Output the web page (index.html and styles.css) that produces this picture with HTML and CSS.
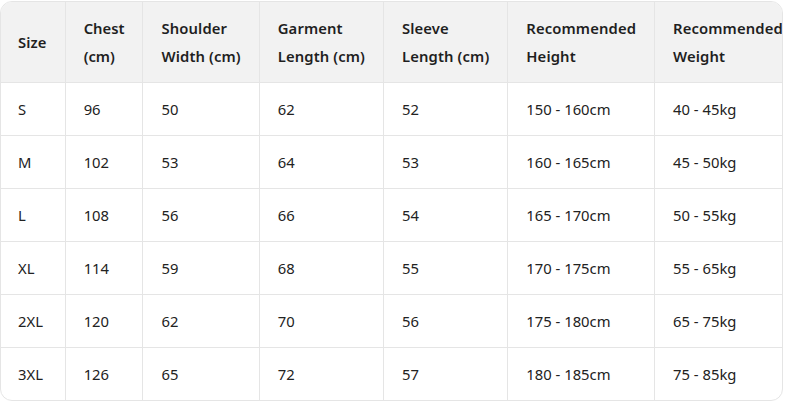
FILE: index.html
```html
<!DOCTYPE html>
<html>
<head>
<meta charset="utf-8">
<link rel="stylesheet" href="styles.css">
</head>
<body>
<div class="wrap">
<table class="size-table">
<thead>
<tr><th>Size</th><th>Chest<br>(cm)</th><th>Shoulder<br>Width (cm)</th><th>Garment<br>Length (cm)</th><th>Sleeve<br>Length (cm)</th><th>Recommended<br>Height</th><th>Recommended<br>Weight</th></tr>
</thead>
<tbody>
<tr><td>S</td><td>96</td><td>50</td><td>62</td><td>52</td><td>150 - 160cm</td><td>40 - 45kg</td></tr>
<tr><td>M</td><td>102</td><td>53</td><td>64</td><td>53</td><td>160 - 165cm</td><td>45 - 50kg</td></tr>
<tr><td>L</td><td>108</td><td>56</td><td>66</td><td>54</td><td>165 - 170cm</td><td>50 - 55kg</td></tr>
<tr><td>XL</td><td>114</td><td>59</td><td>68</td><td>55</td><td>170 - 175cm</td><td>55 - 65kg</td></tr>
<tr><td>2XL</td><td>120</td><td>62</td><td>70</td><td>56</td><td>175 - 180cm</td><td>65 - 75kg</td></tr>
<tr><td>3XL</td><td>126</td><td>65</td><td>72</td><td>57</td><td>180 - 185cm</td><td>75 - 85kg</td></tr>
</tbody>
</table>
</div>
</body>
</html>
```
FILE: styles.css
```css
html, body { margin: 0; padding: 0; background: #fff; }
body { font-family: "Noto Sans", "Open Sans", sans-serif; font-size: 14.8px; color: #1f1f1f; }
.wrap {
  width: 781px;
  margin-top: 1px;
  border: 1px solid #e5e5e5;
  border-radius: 12px;
  overflow: hidden;
}
.size-table { border-collapse: collapse; white-space: nowrap; }
.size-table th, .size-table td {
  text-align: left;
  padding: 12px 18px 12px 18px;
  line-height: 28px;
  border-right: 1px solid #e5e5e5;
  border-bottom: 1px solid #e5e5e5;
}
.size-table th { background: #f2f2f2; font-weight: 600; letter-spacing: 0.12px; }
.size-table td { font-weight: 400; color: #222; }
.size-table th:first-child, .size-table td:first-child { padding-left: 17px; }
.size-table th:nth-child(2) { letter-spacing: 0; }
.size-table tbody tr:last-child td { border-bottom: none; }
```
